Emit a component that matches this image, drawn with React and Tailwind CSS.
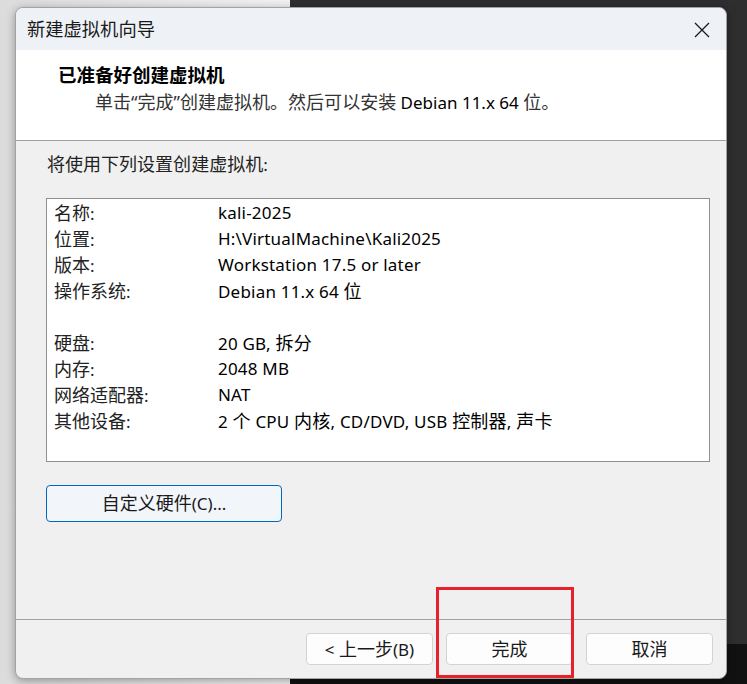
import React from 'react';

const cjk = { fontFamily: '"Noto Sans", "Noto Sans CJK SC", sans-serif' };

// CJK glyphs in the original render a touch wider than the latin text
function T({ children }) {
  const parts = String(children).split(/([\u3000-\u303f\u4e00-\u9fff\uff00-\uffef“”]+)/);
  return (
    <span>
      {parts.map((p, i) =>
        i % 2 === 1 ? (
          <span key={i} className="text-[1.06em]">{p}</span>
        ) : (
          <React.Fragment key={i}>{p}</React.Fragment>
        )
      )}
    </span>
  );
}

const rows = [
  ['名称:', 'kali-2025'],
  ['位置:', 'H:\\VirtualMachine\\Kali2025'],
  ['版本:', 'Workstation 17.5 or later'],
  ['操作系统:', 'Debian 11.x 64 位'],
  null,
  ['硬盘:', '20 GB, 拆分'],
  ['内存:', '2048 MB'],
  ['网络适配器:', 'NAT'],
  ['其他设备:', '2 个 CPU 内核, CD/DVD, USB 控制器, 声卡'],
];

function FooterButton({ children }) {
  return (
    <button className="w-[127px] h-[32px] bg-[#fdfdfd] border border-[#d3d3d3] rounded-[4px] text-[17px] leading-none text-[#1a1a1a] flex items-center justify-center">
      <T>{children}</T>
    </button>
  );
}

export default function App() {
  return (
    <div className="relative w-[747px] h-[684px] overflow-hidden bg-[#2b2b2b]" style={cjk}>
      {/* desktop behind */}
      <div className="flex h-full">
        <div className="w-[290px] h-full bg-gradient-to-r from-[#dcdcdc] to-[#f2f2f2]" />
        <div className="flex-1 flex flex-col">
          <div className="flex-1 bg-[#2e2e2e]" />
          <div className="h-[40px] bg-[#111]" />
        </div>
      </div>

      {/* dialog window */}
      <div className="absolute left-[15px] top-[7px] w-[712px] h-[672px] flex flex-col rounded-[8px] border border-[#a3a3a3] bg-[#f0f0f0] overflow-hidden shadow-[0_2px_10px_rgba(0,0,0,0.35)]">
        {/* title bar */}
        <div className="h-[42px] shrink-0 bg-[#eef2f7] flex items-center justify-between pl-[11px] pr-[16px]">
          <span className="text-[18.3px] text-[#1a1a1a]">新建虚拟机向导</span>
          <svg width="16" height="16" viewBox="0 0 16 16" className="mt-[1px]">
            <path d="M1 1 L15 15 M15 1 L1 15" stroke="#1a1a1a" strokeWidth="1.3" fill="none" />
          </svg>
        </div>

        {/* header */}
        <div className="h-[91px] shrink-0 bg-white border-b border-[#a0a0a0] pl-[42px] pt-[12px]">
          <div className="text-[18.5px] font-bold text-black leading-[26px]">已准备好创建虚拟机</div>
          <div className="pl-[37px] mt-[1px] text-[17px] text-[#333] leading-[26px]">
            <T>单击“完成”创建虚拟机。然后可以安装 </T>
            <span className="text-black">Debian 11.x 64</span> <T>位。</T>
          </div>
        </div>

        {/* body */}
        <div className="flex-1 flex flex-col pl-[30px] pr-[16px] pt-[11px]">
          <div className="text-[17px] text-[#222] leading-[24px] pl-[1px]"><T>将使用下列设置创建虚拟机:</T></div>
          <div className="mt-[21px] h-[264px] bg-white border border-[#8e8f8f] pt-[1px] pl-[7px]">
            {rows.map((r, i) =>
              r ? (
                <div key={i} className="flex h-[26px] items-center text-[17px]">
                  <span className="w-[164px] text-[#222]"><T>{r[0]}</T></span>
                  <span className="text-black tracking-[0.2px]"><T>{r[1]}</T></span>
                </div>
              ) : (
                <div key={i} className="h-[26px]" />
              )
            )}
          </div>
          <button className="mt-[23px] w-[236px] h-[37px] rounded-[4px] border border-[#0067c0] bg-[#f2f6fb] text-[17px] leading-none text-[#1a1a1a] flex items-center justify-center">
            <T>自定义硬件(C)...</T>
          </button>
        </div>

        {/* footer */}
        <div className="h-[59px] shrink-0 border-t border-[#a0a0a0] flex justify-end gap-[13px] pr-[13px] pt-[13px]">
          <FooterButton>&lt; 上一步(B)</FooterButton>
          <FooterButton>完成</FooterButton>
          <FooterButton>取消</FooterButton>
        </div>
      </div>

      {/* red highlight */}
      <div className="absolute left-[436px] top-[587px] w-[138px] h-[91px] border-[3px] border-[#e8202a]" />
    </div>
  );
}
